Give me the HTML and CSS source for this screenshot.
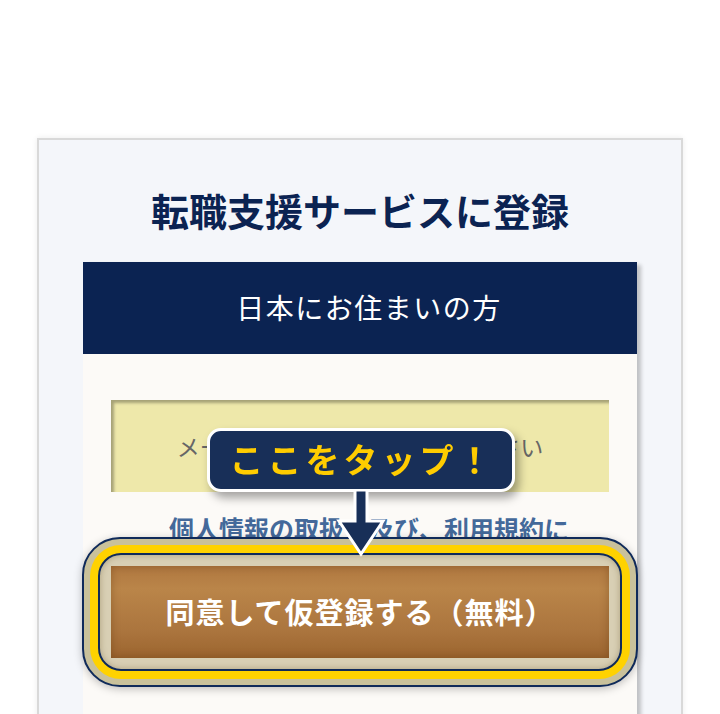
FILE: index.html
```html
<!DOCTYPE html>
<html lang="ja">
<head>
    <meta charset="UTF-8">
    <meta name="viewport" content="width=device-width, initial-scale=1.0">
    <title>転職支援サービスに登録</title>
    <link rel="stylesheet" href="styles.css">
</head>
<body>

<div class="container">
    <h1 class="title">転職支援サービスに登録</h1>

    <!-- Registration panel -->
    <div class="panel">
        <div class="panel-head">日本にお住まいの方</div>
        <div class="panel-body">
            <input class="email-field" type="email" placeholder="メールアドレスを入力してください">
            <p class="terms"><a href="#">個人情報の取扱い及び、利用規約に<br>同意の上ご登録ください</a></p>
        </div>
    </div>
</div>

<!-- Floating call to action -->
<div class="cta">
    <div class="tap-hint">
        <span class="tap-label">ここをタップ！</span>
        <svg class="tap-arrow" width="60" height="68" viewBox="0 0 60 68">
            <path d="M24 0 H36 V31 H52 L30 64 L8 31 H24 Z" fill="#182f58" stroke="#fff" stroke-width="3" stroke-linejoin="miter"/>
        </svg>
    </div>
    <div class="cta-ring">
        <div class="cta-band">
            <div class="cta-well">
                <a class="cta-button" href="#">同意して仮登録する（無料）</a>
            </div>
        </div>
    </div>
</div>

</body>
</html>
```

FILE: styles.css
```css
body {
    margin: 0;
    padding: 0;
    background-color: #fff;
    font-family: "Noto Sans CJK JP", sans-serif;
    overflow: hidden;
}

.container {
    box-sizing: border-box;
    width: 646px;
    margin: 138px auto 0;
    padding: 44px 0 200px;
    background-color: #f4f6fa;
    border: 2px solid #d9d9d9;
    box-shadow: 0 0 6px rgba(0, 0, 0, 0.08);
}

.title {
    margin: 0 0 26px;
    font-size: 38px;
    line-height: 52px;
    font-weight: 700;
    text-align: center;
    color: #0b2352;
}

.panel {
    margin: 0 44px;
    background-color: #fcfaf7;
    box-shadow: 4px 3px 4px rgba(0, 0, 0, 0.22);
}

.panel-head {
    height: 92px;
    padding-left: 18px;
    line-height: 90px;
    font-size: 28px;
    letter-spacing: 1.5px;
    text-align: center;
    color: #fff;
    background-color: #0b2352;
}

.panel-body {
    padding: 46px 28px 200px;
}

.email-field {
    display: block;
    box-sizing: border-box;
    width: 100%;
    height: 92px;
    border: none;
    outline: none;
    background-color: #eee8aa;
    box-shadow: inset 3px 3px 3px rgba(0, 0, 0, 0.3);
    font-family: inherit;
    font-size: 23px;
    text-align: center;
    color: #444;
}

.email-field::placeholder {
    color: #666;
}

.terms {
    margin: 18px 0 0;
    padding-left: 18px;
    font-size: 25px;
    line-height: 36px;
    font-weight: 700;
    text-align: center;
}

.terms a {
    color: #44699a;
}

/* floating button with the tap hint above it */
.cta {
    position: fixed;
    left: 82px;
    bottom: 27px;
    width: 556px;
}

.tap-hint {
    position: absolute;
    left: 125px;
    top: -109px;
    width: 308px;
    z-index: 2;
}

.tap-label {
    display: block;
    box-sizing: border-box;
    height: 64px;
    padding-left: 3px;
    border: 3px solid #fff;
    border-radius: 14px;
    background-color: #182f58;
    box-shadow: 4px 6px 10px rgba(0, 0, 0, 0.35);
    font-size: 34px;
    line-height: 56px;
    font-weight: 700;
    letter-spacing: 4px;
    text-align: center;
    color: #ffcc00;
}

.tap-arrow {
    position: absolute;
    left: 124px;
    top: 62px;
}

.cta-ring {
    padding: 6px;
    border: 2px solid #0f2a5a;
    border-radius: 38px;
    background-color: #c9c19b;
    box-shadow: 0 2px 8px rgba(0, 0, 0, 0.25);
}

.cta-band {
    padding: 8px;
    border-radius: 31px;
    background-color: #ffd200;
}

.cta-well {
    padding: 11px;
    border: 2px solid #0f2a5a;
    border-radius: 23px;
    background-color: #d8cfb4;
    box-shadow: inset 0 0 6px rgba(90, 70, 20, 0.35);
}

.cta-button {
    display: block;
    height: 92px;
    line-height: 90px;
    background: linear-gradient(#b07840, #ba8549 25%, #ab753e 70%, #9c652f);
    box-shadow: inset 0 0 8px rgba(80, 40, 0, 0.35);
    font-size: 29px;
    font-weight: 700;
    letter-spacing: 1px;
    text-align: center;
    text-decoration: none;
    color: #fff;
}
```
